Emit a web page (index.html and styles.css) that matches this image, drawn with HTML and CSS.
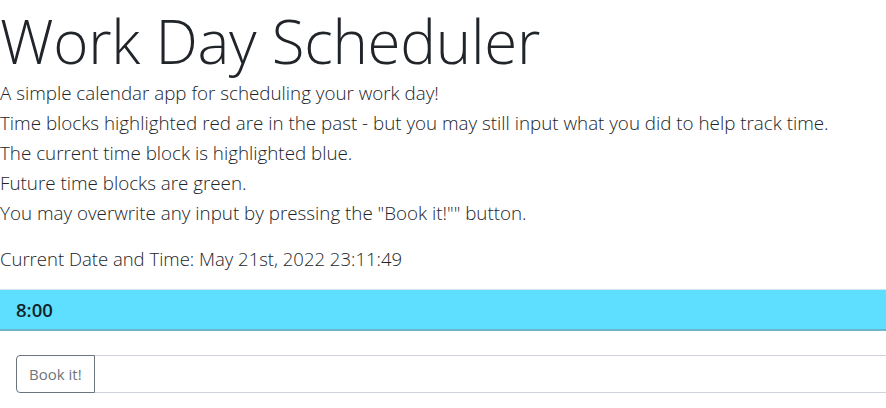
FILE: index.html
```html
<!DOCTYPE html>
<html lang="en">
<head>
<meta charset="utf-8">
<title>Work Day Scheduler</title>
<link rel="stylesheet" href="styles.css">
</head>
<body>
<header class="intro">
  <h1 class="title">Work Day Scheduler</h1>
  <div class="lead">
    <p>A simple calendar app for scheduling your work day!</p>
    <p>Time blocks highlighted red are in the past - but you may still input what you did to help track time.</p>
    <p>The current time block is highlighted blue.</p>
    <p>Future time blocks are green.</p>
    <p>You may overwrite any input by pressing the "Book it!"" button.</p>
  </div>
  <p class="now">Current Date and Time: May 21st, 2022 23:11:49</p>
</header>
<main class="schedule">
  <section class="block">
    <div class="hour present">8:00</div>
    <div class="entry">
      <button class="book" type="button">Book it!</button>
      <input class="task" type="text">
    </div>
  </section>
</main>
</body>
</html>
```
FILE: styles.css
```css
html, body {
  margin: 0;
  padding: 0;
  background: #fff;
}
body {
  font-family: "Open Sans", "Noto Sans", sans-serif;
  color: #212529;
}
.title {
  margin: 0 0 -4px;
  font-weight: 300;
  font-size: 60px;
  line-height: 82px;
  letter-spacing: -0.25px;
  white-space: nowrap;
}
.lead p {
  margin: 0;
  font-size: 18.8px;
  font-weight: 300;
  line-height: 30px;
  white-space: nowrap;
}
.now {
  margin: 16px 0 0;
  font-size: 18.5px;
  font-weight: 300;
  line-height: 30px;
}
.schedule {
  margin-top: 15px;
  overflow: hidden;
}
.hour {
  box-sizing: border-box;
  height: 42px;
  padding: 0 16px;
  display: flex;
  align-items: center;
  font-size: 18.5px;
  font-weight: 600;
  color: #13232b;
}
.present {
  background: #5fdfff;
  border-top: 1px solid #cfe6ec;
  border-bottom: 2px solid #6ab6cc;
}
.entry {
  display: flex;
  margin: 24px -20px 16px 16px;
  height: 38px;
}
.book {
  box-sizing: border-box;
  height: 38px;
  padding: 0 12px;
  font-family: "Open Sans", "Noto Sans", sans-serif;
  font-size: 15px;
  color: #6c757d;
  background: #fff;
  border: 1px solid #6c757d;
  border-radius: 4px 0 0 4px;
}
.task {
  flex: 1;
  box-sizing: border-box;
  height: 38px;
  border: 1px solid #ced4da;
  border-left: none;
  margin: 0;
  padding: 0 12px;
}
```
